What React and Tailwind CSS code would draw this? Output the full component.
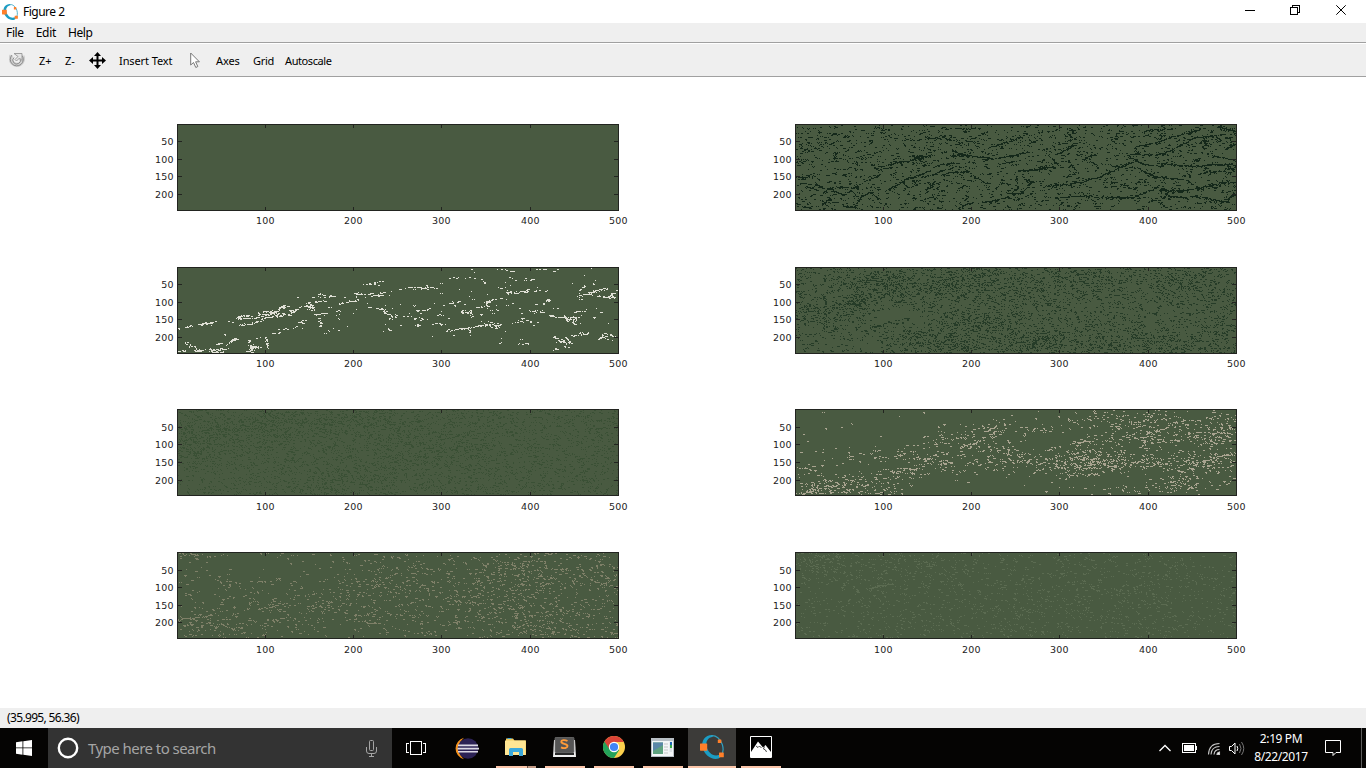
import React from "react";

const W = 442;
const H = 87;

function makeRandom(seed) {
  let s = seed;
  return () => {
    s = (s + 0x6d2b79f5) | 0;
    let t = Math.imul(s ^ (s >>> 15), 1 | s);
    t = (t + Math.imul(t ^ (t >>> 7), 61 | t)) ^ t;
    return ((t ^ (t >>> 14)) >>> 0) / 4294967296;
  };
}

// Builds a one-pixel-grid path. Streaks and blobs are given at three units per
// pixel: streak = [x1, y1, x2, y2, density, spread], blob = [cx, cy, rx, ry, density].
function buildTexture({ seed, base = 0, run = 0.3, gain = 1, gaps = 0.08, blobs = [], streaks = [], strokes = 0, strokeLen = 9 }) {
  const rnd = makeRandom(seed);
  const grid = new Uint8Array(W * H);
  const put = (x, y) => {
    x = Math.round(x);
    y = Math.round(y);
    if (x > 0 && y > 0 && x < W - 1 && y < H - 1) grid[y * W + x] = 1;
  };
  for (let y = 1; y < H - 1; y++) {
    for (let x = 1; x < W - 1; x++) {
      let d = base;
      for (const [cx, cy, rx, ry, v] of blobs) {
        const a = (x * 3 - cx) / rx;
        const b = (y * 3 - cy) / ry;
        const q = a * a + b * b;
        if (q < 4) d += v * gain * Math.exp(-q * 1.3);
      }
      if (rnd() < d) {
        put(x, y);
        if (rnd() < run) put(x + 1, y);
        if (rnd() < run * 0.4) put(x + 2, y);
        if (rnd() < run * 0.3) put(x + 1, y + 1);
      }
    }
  }
  const walk = (x1, y1, x2, y2, d, spread) => {
    const n = Math.max(1, Math.round(Math.max(Math.abs(x2 - x1), Math.abs(y2 - y1))));
    let wob = 0;
    let on = true;
    let bulge = 1;
    for (let i = 0; i <= n; i++) {
      wob += (rnd() - 0.5) * 1.1;
      wob *= 0.88;
      if (on ? rnd() < gaps : rnd() < 0.45) on = !on;
      if (rnd() < 0.25) bulge = rnd() * 1.7;
      const t = i / n;
      const x = x1 + (x2 - x1) * t;
      const y = y1 + (y2 - y1) * t + wob;
      if (on && rnd() < d) {
        put(x, y);
        if (rnd() < 0.5) put(x + 1, y);
      }
      const k = Math.ceil(spread * bulge);
      for (let j = 0; j < k; j++) {
        if (rnd() < d * 0.5) {
          const px = x + (rnd() - 0.5) * 3;
          const py = y + (rnd() + rnd() - 1) * (spread + 0.4) * bulge;
          put(px, py);
          if (rnd() < 0.4) put(px + 1, py);
        }
      }
    }
  };
  for (let i = 0; i < strokes; i++) {
    const x = rnd() * W;
    const y = rnd() * H;
    const l = 2 + rnd() * strokeLen;
    const m = rnd() < 0.7 ? -0.4 + rnd() * 0.4 : rnd() * 3 - 1.5;
    walk(x, y, x + l, y + l * m, 0.65, rnd() < 0.3 ? 1 : 0);
  }
  for (const [a, b, c, e, d, s] of streaks) walk(a / 3, b / 3, c / 3, e / 3, d, s);
  let path = "";
  for (let y = 0; y < H; y++) {
    for (let x = 0; x < W; x++) {
      if (!grid[y * W + x]) continue;
      let n = 1;
      while (x + n < W && grid[y * W + x + n]) n++;
      path += `M${x} ${y}h${n}v1h-${n}z`;
      x += n;
    }
  }
  return path;
}

const darkTexture = buildTexture({
  seed: 11,
  base: 0.035,
  run: 0.4,
  gaps: 0.1,
  strokes: 270,
  strokeLen: 6,
  blobs: [[40, 60, 150, 60, 0.04], [300, 220, 500, 60, 0.02], [700, 60, 400, 60, 0.03], [1250, 40, 120, 40, 0.05]],
  streaks: [
    [250, 127, 380, 100, 0.9, 1], [225, 120, 250, 135, 0.9, 2], [345, 97, 415, 97, 0.9, 1], [370, 105, 385, 125, 1, 1],
    [180, 185, 255, 155, 0.8, 1], [270, 200, 330, 165, 0.9, 1], [330, 165, 405, 140, 1, 1], [130, 190, 190, 188, 0.9, 1],
    [80, 205, 105, 192, 1, 1], [105, 192, 140, 215, 1, 1], [80, 240, 105, 228, 0.9, 2], [145, 245, 180, 248, 1, 1],
    [180, 245, 200, 215, 1, 1], [200, 215, 225, 202, 1, 1], [225, 202, 245, 220, 1, 1], [245, 220, 255, 235, 1, 1],
    [390, 208, 420, 170, 1, 1], [0, 237, 45, 255, 1, 1], [0, 160, 60, 155, 0.8, 2], [60, 180, 80, 190, 1, 2],
    [415, 150, 470, 130, 0.9, 1], [430, 125, 490, 115, 0.9, 1], [470, 80, 500, 95, 1, 1], [490, 90, 580, 100, 0.9, 1],
    [510, 140, 560, 170, 1, 1], [560, 170, 580, 180, 1, 1], [430, 35, 500, 60, 0.7, 2], [390, 40, 435, 42, 1, 1],
    [580, 72, 655, 45, 0.9, 1], [560, 105, 650, 95, 0.8, 1], [650, 95, 700, 88, 0.8, 1],
    [620, 165, 640, 185, 0.9, 1], [662, 155, 666, 190, 0.8, 2], [690, 165, 710, 172, 1, 2], [635, 208, 680, 206, 1, 1],
    [680, 206, 710, 170, 1, 1], [670, 140, 780, 130, 0.9, 1], [760, 95, 790, 125, 1, 1], [780, 90, 820, 72, 0.9, 1],
    [820, 72, 850, 55, 0.8, 1], [750, 187, 855, 175, 1, 1], [855, 175, 920, 152, 1, 1], [920, 152, 1000, 115, 1, 1],
    [820, 110, 850, 150, 0.9, 1], [860, 105, 900, 90, 0.8, 1], [900, 220, 1015, 220, 1, 1.5], [780, 220, 900, 215, 0.8, 1],
    [1000, 92, 1100, 90, 1, 1], [1100, 90, 1150, 65, 1, 1], [1150, 65, 1200, 40, 1, 1], [1200, 40, 1260, 32, 1, 1],
    [1260, 32, 1280, 60, 1, 1], [1225, 40, 1232, 60, 1, 1], [1000, 98, 1050, 120, 1, 1], [1050, 120, 1100, 130, 1, 1],
    [1085, 118, 1180, 125, 1, 1.5], [1180, 125, 1320, 120, 1, 1], [1030, 130, 1070, 155, 1, 1], [1070, 158, 1170, 165, 1, 1],
    [1170, 165, 1190, 180, 1, 1], [1210, 150, 1320, 128, 1, 1], [1010, 222, 1090, 185, 1, 1.5], [1090, 200, 1180, 195, 1, 2],
    [1180, 195, 1320, 170, 1, 2], [1110, 208, 1180, 225, 1, 2], [1200, 215, 1300, 235, 0.9, 1.5], [1260, 245, 1320, 205, 0.9, 2],
    [1080, 220, 1110, 245, 1, 2], [1020, 70, 1120, 40, 1, 1], [1120, 40, 1210, 20, 0.9, 1], [1050, 20, 1130, 12, 0.9, 1],
    [1270, 10, 1320, 20, 0.9, 2], [975, 180, 1005, 190, 1, 2], [1250, 95, 1320, 108, 0.9, 1], [440, 150, 520, 140, 0.9, 1],
    [490, 250, 530, 235, 1, 1], [560, 235, 640, 220, 0.8, 1], [1290, 75, 1320, 60, 0.9, 1], [450, 15, 540, 10, 0.6, 2],
  ],
});

const whiteTexture = buildTexture({
  seed: 28,
  gaps: 0.22,
  streaks: [
    [3, 183, 10, 185, 0.8, 1], [28, 181, 75, 170, 1, 1], [75, 170, 120, 164, 0.9, 1], [85, 168, 105, 168, 1, 1.3], [150, 161, 180, 162, 0.5, 0],
    [180, 156, 245, 150, 1, 1.5], [190, 172, 260, 158, 0.9, 1], [185, 145, 225, 145, 0.8, 1], [245, 140, 305, 138, 1, 2.5],
    [260, 134, 300, 134, 1, 1], [250, 157, 300, 147, 1, 2], [300, 148, 340, 140, 0.9, 1.3], [305, 122, 335, 118, 1, 3], [340, 129, 370, 122, 0.9, 1.3],
    [345, 138, 375, 120, 0.5, 1], [385, 118, 415, 117, 1, 3], [395, 108, 410, 125, 1, 2], [415, 104, 450, 100, 0.8, 1.2],
    [405, 90, 435, 92, 0.8, 1], [430, 82, 475, 85, 0.8, 1], [415, 140, 450, 137, 0.8, 1.2], [365, 166, 385, 160, 0.9, 1.2],
    [350, 181, 380, 166, 0.9, 0], [300, 187, 345, 185, 0.8, 0], [290, 198, 305, 195, 0.8, 1.2], [430, 152, 433, 175, 0.8, 1],
    [485, 110, 500, 108, 0.6, 1], [510, 104, 545, 96, 0.8, 1], [520, 78, 550, 77, 0.7, 0], [540, 82, 585, 77, 1, 2],
    [585, 85, 620, 83, 0.9, 1], [560, 50, 625, 42, 0.7, 0], [580, 52, 610, 53, 0.9, 0], [615, 78, 630, 72, 0.9, 1],
    [645, 71, 690, 66, 0.9, 0], [690, 62, 780, 62, 0.8, 1], [750, 53, 765, 65, 0.9, 0], [575, 120, 620, 122, 0.8, 0],
    [510, 129, 540, 127, 0.6, 0], [480, 131, 490, 130, 1, 0], [622, 133, 645, 146, 1, 2], [640, 155, 665, 141, 0.9, 1],
    [635, 180, 640, 188, 1, 1], [680, 148, 705, 149, 0.8, 1], [720, 128, 760, 123, 0.6, 1.5], [715, 155, 740, 157, 0.7, 1],
    [715, 178, 730, 175, 0.9, 1], [765, 166, 810, 173, 0.8, 1.3], [785, 142, 800, 140, 0.6, 1], [820, 108, 850, 105, 0.6, 1],
    [855, 135, 885, 140, 0.9, 3], [900, 120, 935, 117, 0.6, 1.5], [930, 110, 960, 96, 0.7, 1.3], [925, 103, 940, 103, 0.5, 1],
    [810, 193, 850, 188, 0.8, 1.3], [850, 185, 930, 173, 1, 1.3], [935, 174, 970, 173, 1, 2], [875, 180, 880, 198, 1, 1],
    [830, 31, 845, 31, 1, 0], [865, 34, 880, 34, 1, 0], [895, 32, 905, 21, 0.8, 0], [915, 35, 925, 46, 0.8, 0],
    [965, 62, 985, 65, 0.6, 0], [990, 75, 1030, 76, 1, 1], [1030, 76, 1055, 69, 0.9, 1], [1070, 73, 1095, 70, 0.7, 0],
    [1105, 75, 1135, 55, 0.8, 0], [1040, 48, 1050, 30, 0.7, 1], [1050, 40, 1080, 34, 0.8, 0], [1080, 5, 1110, 7, 0.7, 1],
    [1130, 10, 1145, 6, 0.6, 0], [1000, 30, 1010, 34, 0.8, 0], [960, 5, 1010, 12, 0.3, 1], [1210, 70, 1225, 50, 0.6, 1],
    [1210, 85, 1245, 78, 0.9, 2.3], [1240, 75, 1290, 62, 0.9, 1.5], [1250, 55, 1255, 40, 0.8, 1], [1265, 86, 1320, 92, 0.9, 1],
    [1300, 86, 1318, 75, 0.9, 1.5], [1205, 87, 1215, 97, 0.9, 1], [1100, 110, 1117, 95, 0.7, 1], [1065, 130, 1100, 135, 0.7, 1.5],
    [1120, 145, 1165, 148, 1, 1], [1165, 148, 1210, 150, 0.9, 1], [1170, 155, 1200, 154, 0.9, 2], [1190, 160, 1193, 170, 1, 1],
    [1190, 136, 1225, 132, 0.7, 0], [1010, 166, 1065, 163, 0.6, 1], [1080, 165, 1085, 162, 1, 0], [1130, 211, 1160, 215, 0.9, 1.3],
    [1145, 218, 1185, 223, 1, 2.3], [1170, 210, 1185, 230, 1, 1], [1180, 202, 1210, 202, 0.8, 1.3], [1210, 199, 1240, 197, 0.9, 1],
    [1265, 215, 1290, 207, 1, 1.2], [1280, 200, 1318, 209, 0.7, 1], [1130, 250, 1142, 244, 1, 0.6], [965, 230, 975, 228, 0.8, 1],
    [1020, 229, 1065, 230, 0.6, 0], [1165, 236, 1175, 238, 1, 0], [5, 252, 25, 250, 1, 2], [28, 230, 55, 238, 0.9, 1.5],
    [60, 247, 75, 254, 1, 2], [50, 252, 90, 250, 0.8, 1], [100, 247, 155, 242, 1, 2], [120, 230, 135, 225, 0.9, 2],
    [150, 235, 170, 215, 1, 1.5], [155, 225, 178, 217, 0.9, 1.5], [215, 215, 225, 248, 1, 2], [220, 238, 255, 238, 0.9, 2],
    [240, 213, 252, 210, 0.9, 0], [268, 212, 273, 245, 0.9, 1.5], [210, 252, 230, 250, 1, 1.5], [145, 200, 150, 208, 0.8, 0],
    [110, 255, 145, 255, 0.8, 0],
  ].map(([a, b, c, e, d, s]) => [a - 3, b, c - 3, e, d * 0.85, s * 1.1]),
  blobs: [[720, 140, 200, 70, 0.01], [1050, 110, 280, 100, 0.009], [450, 130, 120, 60, 0.012]],
});

const tealTexture = buildTexture({
  seed: 35,
  base: 0.085,
  run: 0.35,
  gain: 0.8,
  blobs: [
    [240, 40, 110, 28, 0.18], [180, 100, 50, 25, 0.3], [70, 140, 90, 28, 0.18], [470, 50, 110, 40, 0.15], [340, 60, 80, 50, 0.08],
    [640, 30, 200, 40, 0.08], [420, 230, 190, 35, 0.18], [510, 170, 60, 40, 0.15], [600, 170, 60, 35, 0.18], [730, 220, 90, 40, 0.2],
    [860, 40, 150, 40, 0.07], [1180, 50, 100, 50, 0.08], [1080, 220, 110, 40, 0.1], [890, 230, 100, 40, 0.1], [1280, 190, 60, 60, 0.08],
    [740, 90, 200, 30, 0.06], [300, 145, 90, 20, -0.16], [240, 235, 70, 30, -0.14], [90, 220, 150, 35, -0.05],
  ],
  streaks: [[240, 175, 340, 153, 0.4, 1], [160, 107, 195, 112, 1, 2], [300, 105, 325, 98, 1, 1], [710, 240, 730, 215, 1, 2], [840, 130, 850, 155, 0.8, 1]],
});

const faintDarkTexture = buildTexture({
  seed: 42,
  base: 0.08,
  run: 0.3,
  blobs: [[240, 50, 190, 60, 0.16], [50, 110, 90, 60, 0.14], [520, 40, 220, 40, 0.08], [720, 110, 250, 90, 0.05], [500, 220, 190, 50, 0.1], [880, 100, 150, 100, 0.05], [1250, 60, 120, 60, 0.03]],
});

const beigeTexture = buildTexture({
  seed: 59,
  base: 0.002,
  run: 0.5,
  gain: 0.72,
  gaps: 0.3,
  blobs: [
    [180, 140, 60, 22, 0.08], [50, 180, 70, 16, 0.09], [330, 135, 80, 18, 0.16], [440, 88, 60, 28, 0.1], [430, 160, 70, 25, 0.14],
    [540, 80, 60, 40, 0.06], [610, 75, 60, 35, 0.1], [520, 110, 60, 14, 0.12], [610, 120, 50, 12, 0.14], [730, 62, 70, 14, 0.12],
    [670, 150, 90, 28, 0.14], [790, 155, 80, 35, 0.1], [880, 140, 70, 40, 0.1], [900, 170, 120, 20, 0.14], [1030, 75, 130, 40, 0.15],
    [1040, 25, 150, 30, 0.1], [1000, 150, 160, 30, 0.11], [1200, 155, 150, 24, 0.16], [1220, 80, 90, 30, 0.16], [1280, 50, 60, 45, 0.16],
    [1160, 220, 65, 35, 0.18], [1000, 235, 180, 14, 0.09], [1290, 210, 40, 25, 0.1], [60, 240, 100, 22, 0.16], [200, 225, 110, 35, 0.16],
    [320, 190, 60, 18, 0.1], [500, 170, 100, 45, 0.04], [870, 25, 80, 30, 0.05],
  ],
  streaks: [
    [0, 178, 60, 170, 0.6, 1], [290, 190, 360, 180, 0.7, 1], [490, 115, 560, 97, 0.7, 1], [580, 62, 605, 50, 0.9, 1],
    [700, 205, 730, 180, 0.9, 0], [810, 210, 835, 190, 0.8, 1], [850, 180, 950, 172, 0.5, 1], [870, 200, 910, 195, 0.8, 1],
    [1050, 75, 1170, 30, 0.6, 1], [1020, 115, 1150, 90, 0.4, 1], [1200, 165, 1320, 130, 0.5, 1], [830, 102, 880, 95, 0.7, 1],
    [640, 110, 640, 150, 0.6, 1], [820, 30, 900, 28, 0.4, 0], [0, 252, 80, 250, 0.7, 1],
  ],
});

const taupeTexture = buildTexture({
  seed: 66,
  base: 0.02,
  run: 0.5,
  gain: 0.8,
  gaps: 0.3,
  blobs: [
    [60, 10, 80, 15, 0.05], [120, 220, 180, 45, 0.07], [350, 150, 200, 50, 0.04], [680, 70, 120, 50, 0.05], [590, 150, 160, 80, 0.03],
    [1030, 50, 130, 60, 0.08], [1250, 70, 100, 60, 0.09], [950, 150, 220, 80, 0.05], [1120, 190, 180, 60, 0.05], [1150, 235, 200, 20, 0.06],
    [220, 50, 180, 50, -0.02],
  ],
  streaks: [[230, 88, 310, 85, 0.7, 0], [0, 203, 110, 190, 0.7, 0.5], [240, 172, 330, 152, 0.5, 1], [390, 180, 450, 145, 0.5, 1], [530, 205, 620, 215, 0.5, 0], [620, 215, 655, 160, 0.6, 0], [810, 75, 820, 50, 0.8, 0], [720, 110, 735, 95, 0.8, 0], [40, 5, 60, 10, 0.9, 1], [110, 80, 140, 98, 0.6, 1]],
});

const faintLightTexture = buildTexture({
  seed: 73,
  base: 0.035,
  run: 0.35,
  blobs: [[90, 30, 110, 40, 0.1], [360, 50, 140, 50, 0.04], [700, 150, 400, 100, 0.012], [950, 80, 250, 90, 0.02]],
  streaks: [[220, 110, 290, 95, 0.9, 0.5]],
});

const PLOTS = [
  { id: "p1", ys: [17, 35, 52, 70], labelY: 100 },
  { id: "p2", ys: [17, 35, 52, 70], labelY: 100, fill: "#14281a", path: darkTexture },
  { id: "p3", ys: [17, 35, 52, 70], labelY: 100, fill: "#e0e0d6", path: whiteTexture },
  { id: "p4", ys: [17, 35, 52, 70], labelY: 100, fill: "#263c28", path: tealTexture },
  { id: "p5", ys: [18, 35, 53, 71], labelY: 101, fill: "#3a5035", path: faintDarkTexture },
  { id: "p6", ys: [18, 35, 53, 71], labelY: 101, fill: "#a9a490", path: beigeTexture },
  { id: "p7", ys: [18, 35, 53, 70], labelY: 101, fill: "#7f8068", path: taupeTexture },
  { id: "p8", ys: [18, 35, 53, 70], labelY: 101, fill: "#5b6b51", path: faintLightTexture },
];

const XS = [88, 176, 264, 353, 441];

function Plot({ ys, fill, path, labelY }) {
  return (
    <svg width="490" height="110" viewBox="-30 0 490 110" className="block overflow-visible font-['DejaVu_Sans',sans-serif] text-[9.5px] tracking-[0.2px]">
      <rect width={W} height={H} fill="#495a41" />
      {path && <path d={path} fill={fill} shapeRendering="crispEdges" />}
      <rect x="0.5" y="0.5" width={W - 1} height={H - 1} fill="none" stroke="#222420" shapeRendering="crispEdges" />
      {XS.map((x, i) => (
        <g key={x}>
          <path d={`M${x + 0.5} 0v4M${x + 0.5} ${H}v-4`} stroke="#222420" shapeRendering="crispEdges" />
          <text x={x + 0.3} y={labelY} textAnchor="middle" fill="#222">{(i + 1) * 100}</text>
        </g>
      ))}
      {ys.map((y, i) => (
        <g key={y}>
          <path d={`M0 ${y + 0.5}h5M${W} ${y + 0.5}h-5`} stroke="#222420" shapeRendering="crispEdges" />
          <text x="-3.200" y={y + 4} textAnchor="end" fill="#222">{(i + 1) * 50}</text>
        </g>
      ))}
    </svg>
  );
}

function OctaveIcon({ size }) {
  return (
    <svg width={size} height={size} viewBox="0 0 24 24">
      <path d="M12 0C5 0 1 6 2.500 12.500 4 19 10 24 15.500 24c2.500 0 4-.8 5-2l-1.500-2C13 22 8 17.500 6.500 11.500 5.500 6.500 8 2.500 13 1.800z" fill="#1b9dc4" />
      <path d="M11 .8C16 0 20.500 4 22.300 9.500c1.400 4.500.9 8.500-1.300 11.500" fill="none" stroke="#2f9fc0" strokeWidth="1.200" />
      <rect x="0" y="8.500" width="7.200" height="7.200" rx=".6" fill="#ff7f2a" />
      <rect x="17.800" y="4.500" width="3.600" height="3.600" rx=".4" fill="#ff7f2a" />
      <rect x="19" y="17.500" width="4.800" height="4.800" rx=".4" fill="#ff7f2a" />
    </svg>
  );
}

function TitleBar() {
  return (
    <header className="flex h-[23px] items-center bg-white pl-[2px]">
      <OctaveIcon size={16} />
      <span className="ml-[5px] text-[12px] leading-none tracking-[-0.5px]">Figure 2</span>
      <svg width="138" height="23" viewBox="0 0 138 23" className="ml-auto" fill="none" stroke="#000" shapeRendering="crispEdges">
        <path d="M17 10.5h10" />
        <path d="M62.5 7.5h7v7h-7zM64.5 7V5.5h7v7H70" />
        <path d="M108.300 5.300l9.400 9.400M117.700 5.300l-9.400 9.400" shapeRendering="auto" />
      </svg>
    </header>
  );
}

function ToolBar() {
  return (
    <div className="flex h-[33px] items-center border-b border-[#a0a0a0] bg-[#efefef] pl-[9px] text-[11px] leading-none">
      <svg width="16" height="17" viewBox="0 0 16 17" fill="none">
        <path d="M2.500 3.500A6.200 6.200 0 1 0 13.500 4" stroke="#cfcfcf" strokeWidth="4" />
        <path d="M3 3A6.500 6.500 0 1 0 13 3.500M5 5.500A3.800 3.800 0 1 0 11 6.500" stroke="#8c8c8c" />
        <path d="M5 1.500h8v7L10.500 6 7.500 9 6 7.500 9 4.500z" fill="#e4e4e4" stroke="#969696" strokeWidth=".9" />
      </svg>
      <span className="ml-[14px] w-[26px]">Z+</span>
      <span className="w-[24px]">Z-</span>
      <svg width="17" height="17" viewBox="0 0 17 17">
        <path d="M8.500 0l3.500 4H9.500v3.500H13V5l4 3.500-4 3.500V9.500H9.500V13H12l-3.500 4L5 13h2.500V9.500H4V12L0 8.500 4 5v2.500h3.500V4H5z" />
      </svg>
      <span className="ml-[13px] w-[71px] tracking-[-0.1px]">Insert Text</span>
      <svg width="10" height="17" viewBox="0 0 10 17">
        <path d="M.7 1v12l2.800-2.500L5.800 15.500l2-1-2.200-4.700h3.800z" fill="#fff" stroke="#777" />
      </svg>
      <span className="ml-[16px] w-[37px] tracking-[-0.1px]">Axes</span>
      <span className="w-[32px] tracking-[-0.3px]">Grid</span>
      <span className="tracking-[-0.4px]">Autoscale</span>
    </div>
  );
}

function AppButton({ children, active, split }) {
  return (
    <div className={"flex h-10 flex-col items-center " + (active ? "ml-px w-12 bg-[#3c3b39]" : "w-[49px]")}>
      <div className="flex h-[38px] items-center justify-center">{children}</div>
      <div className={"flex h-[2px] justify-end bg-[#fbc5a9] " + (active ? "w-12" : "w-10")}>
        {split && <span className="h-[2px] w-[9px] border-l border-[#6b5549] bg-[#c49b86]" />}
      </div>
    </div>
  );
}

function TaskBar() {
  return (
    <footer className="flex h-10 bg-[#050403] text-white">
      <div className="flex w-12 items-center justify-center">
        <svg width="16" height="16" viewBox="0 0 16 16" fill="#fff">
          <path d="M0 2.200l6.500-.9v6.200H0zM7.300 1.200L16 0v7.500H7.300zM0 8.300h6.500v6.400L0 13.800zM7.300 8.300H16V16l-8.700-1.200z" />
        </svg>
      </div>
      <div className="flex w-[344px] items-center bg-[#333] pl-[9px] pr-[14px]">
        <svg width="22" height="22" viewBox="0 0 22 22"><circle cx="11" cy="11" r="9.200" fill="none" stroke="#fff" strokeWidth="2.400" /></svg>
        <span className="ml-[9px] text-[15px] leading-none tracking-[-0.55px] text-[#a5a5a5]">Type here to search</span>
        <svg width="13" height="17" viewBox="0 0 13 17" fill="none" stroke="#a5a5a5" className="ml-auto">
          <path d="M4.500 1.500q0-1 1-1h2q1 0 1 1v8q0 1-1 1h-2q-1 0-1-1zM1.500 7v4q0 2.500 2.500 2.500h5q2.500 0 2.500-2.500V7M6.500 13.500v3M4 16.500h5" />
        </svg>
      </div>
      <div className="flex w-12 items-center justify-center">
        <svg width="20" height="16" viewBox="0 0 20 16" fill="none" stroke="#fff" shapeRendering="crispEdges">
          <path d="M4.500 1.500h11v13h-11zM3 3.500H.5v9H3M17 3.500h2.500v9H17" />
        </svg>
      </div>
      <div className="flex w-[51px] items-center justify-center pl-px">
        <svg width="25" height="23" viewBox="0 0 25 23">
          <path d="M10 .8A11 11 0 0 0 10 22.200 14 14 0 0 1 10 .8z" fill="#f7941e" />
          <circle cx="14" cy="11.500" r="10.300" fill="#2c2255" />
          <path d="M4 7.500h20v1.700H4zM3.500 10.700H25v1.700H3.500zM4 13.900h20v1.600H4z" fill="#dcd9e6" />
        </svg>
      </div>
      <AppButton split>
        <svg width="22" height="20" viewBox="0 0 22 20">
          <path d="M1 1.500h7l1.500 2H21V18H1z" fill="#f3ce62" />
          <path d="M0 3.500h20.500V18H0z" fill="#ffe694" />
          <path d="M2.500 1.500h4" stroke="#38a4d8" />
          <path d="M4 19v-6.500Q4 11 5.500 11h11q1.500 0 1.500 1.500V19h-4v-4H8v4z" fill="#3ba9dc" />
        </svg>
      </AppButton>
      <AppButton>
        <svg width="23" height="21" viewBox="0 0 23 21">
          <path d="M1 3h21l1 17H0z" fill="#f0f0f0" />
          <rect x="2" y="0" width="19" height="16" rx="1.500" fill="#555" stroke="#777" strokeWidth=".7" />
          <path d="M2 16h19v2H2z" fill="#292929" />
          <path d="M14.500 4c-3-1.500-6.200-1-6.200.8 0 2.500 6.200 1.600 6.200 4.200 0 2-3.500 2.800-6.500 1.300" fill="none" stroke="#ff9b38" strokeWidth="1.900" />
        </svg>
      </AppButton>
      <AppButton>
        <svg width="22" height="22" viewBox="0 0 22 22">
          <circle cx="11" cy="11" r="11" fill="#fcd04d" />
          <path d="M11 11L1.470 5.500A11 11 0 0 0 11 22l5.200-8z" fill="#24a35a" />
          <path d="M1.470 5.500A11 11 0 0 1 20.530 5.500L20.800 6H11l-4.600 7z" fill="#db4437" />
          <circle cx="11" cy="11" r="5.200" fill="#fff" />
          <circle cx="11" cy="11" r="4.100" fill="#4285f4" />
        </svg>
      </AppButton>
      <AppButton>
        <svg width="23" height="19" viewBox="0 0 23 19">
          <path d="M0 0h23v19H0z" fill="#b9c0c6" />
          <path d="M1 3h21v15H1z" fill="#f4f6f7" />
          <path d="M2 4.500h10V16H2z" fill="#5fa27f" />
          <path d="M2 4.500h10V7L2 13z" fill="#5b87a8" />
          <path d="M13 6h4M13 9h4M13 12h4M13 15h4" stroke="#c6c6c6" />
          <path d="M18.500 3.500H21V14h-2.500z" fill="#dce2e6" />
          <path d="M19 4h2v3h-2z" fill="#2066b4" />
          <path d="M19 7h2v3h-2z" fill="#38a849" />
        </svg>
      </AppButton>
      <AppButton active><OctaveIcon size={24} /></AppButton>
      <AppButton>
        <svg width="22" height="22" viewBox="0 0 22 22">
          <path d="M.5.500h21v21H.5z" stroke="#fff" />
          <path d="M1 16l7-10.500 5 6 2.500-2.500L21 16v5H1z" fill="#fff" />
          <path d="M6 10l2 1.500L9.500 10l2 2M14.500 10.500l-1 2.500 2 1 1 2" stroke="#000" strokeWidth=".7" fill="none" />
        </svg>
      </AppButton>
      <div className="ml-auto flex items-center">
        <svg width="88" height="40" viewBox="0 0 88 40" fill="none" stroke="#fff">
          <path d="M2.500 23l5.500-5.500 5.500 5.500" strokeWidth="1.300" />
          <path d="M25.500 15.500h13v9h-13zM39.500 18v4" shapeRendering="crispEdges" />
          <path d="M27 17h10v6H27z" fill="#fff" stroke="none" />
          <g stroke="#c9c9c9" strokeWidth="1.100">
            <path d="M51.500 26.500Q52 15.500 62.500 15.500M54 26.500Q54.500 18.500 62.500 18.500M57 26.500Q57.500 21.500 62.500 21.500" />
            <path d="M60 26.500q0-2 2.500-2.500v2.500z" fill="#fff" />
          </g>
          <path d="M72.500 18.500h2l3.500-3.500v11l-3.500-3.500h-2z" />
          <path d="M80 18q1.500 2.500 0 5" />
          <path d="M82.500 16q3 4.500 0 9M84.500 14q4.500 6.500 0 13" stroke="#777" />
        </svg>
        <div className="ml-[4px] flex w-[64px] flex-col items-center gap-[6px] text-[12px] leading-[12px] tracking-[-0.4px]">
          <span className="whitespace-nowrap">2:19 PM</span>
          <span className="whitespace-nowrap">8/22/2017</span>
        </div>
        <svg width="17" height="16" viewBox="0 0 17 16" fill="none" stroke="#fff" className="ml-[12px]">
          <path d="M.5.500h15v12H11l-3 3v-3H.5z" />
        </svg>
        <div className="ml-[19px] mr-[4px] h-10 w-px bg-[#5c5c5c]" />
      </div>
    </footer>
  );
}

export default function App() {
  return (
    <div className="flex h-[768px] w-[1366px] flex-col overflow-hidden bg-white font-['Noto_Sans','Open_Sans',sans-serif] text-black">
      <TitleBar />
      <nav className="flex h-[19px] items-center gap-[12px] bg-[#efefef] pl-[6px] text-[12px] leading-none tracking-[-0.35px]">
        <span>File</span>
        <span>Edit</span>
        <span>Help</span>
      </nav>
      <div className="h-[2px] border-b border-white bg-[#a0a0a0]" />
      <ToolBar />
      <main className="grid h-[631px] auto-rows-[142.700px] grid-cols-[618px_618px] bg-white pl-[147px] pt-[47px]">
        {PLOTS.map((p) => (
          <div key={p.id} className="h-[110px] w-[490px]">
            <Plot {...p} />
          </div>
        ))}
      </main>
      <div className="flex h-5 items-center bg-[#efefef] pl-[7px] text-[12px] leading-none tracking-[-0.65px]">(35.995, 56.36)</div>
      <TaskBar />
    </div>
  );
}
